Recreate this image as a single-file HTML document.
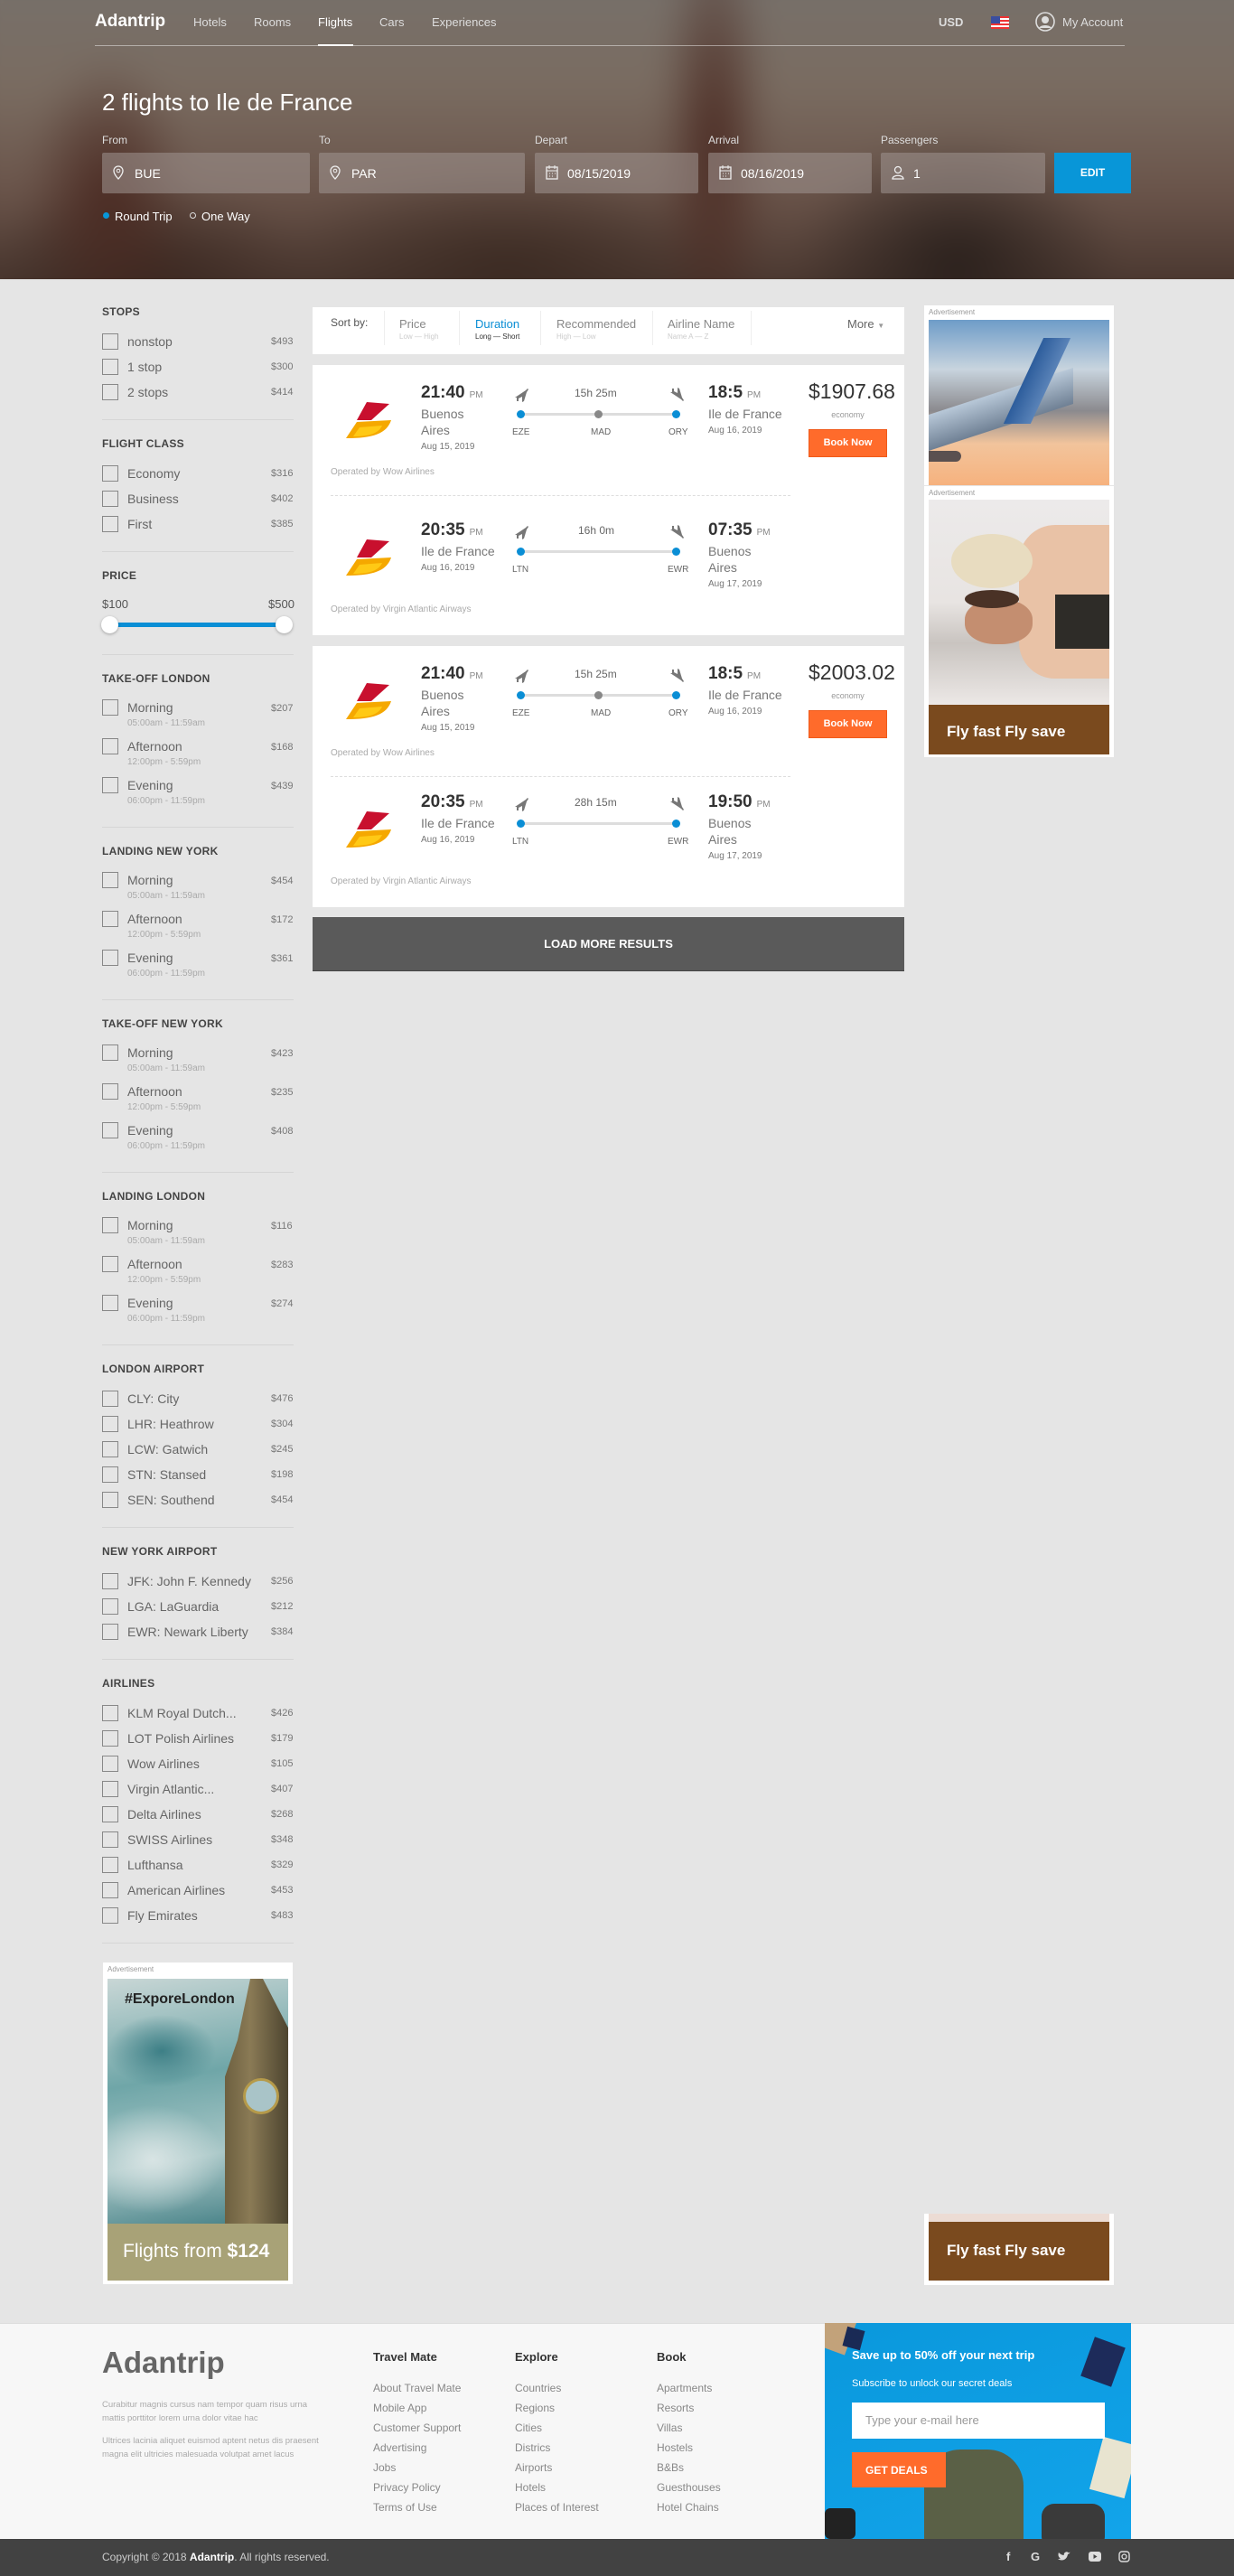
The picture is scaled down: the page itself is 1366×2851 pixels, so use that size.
<!DOCTYPE html>
<html><head><meta charset="utf-8">
<style>
*{margin:0;padding:0;box-sizing:border-box}
body{width:1366px;height:2851px;background:#e5e5e5;font-family:"Liberation Sans",Arial,sans-serif;position:relative;overflow:hidden;color:#555}
.a{position:absolute;white-space:nowrap}
.hero{position:absolute;left:0;top:0;width:1366px;height:309px;overflow:hidden;background:#6e655e}
.hero .bg{position:absolute;inset:-40px;filter:blur(18px);background:
radial-gradient(ellipse 60px 260px at 830px 200px,#4a2a22 0,transparent 100%),
radial-gradient(ellipse 90px 160px at 160px 260px,#4a2a22 0,transparent 100%),
radial-gradient(ellipse 180px 140px at 1100px 330px,#2a201c 0,transparent 100%),
radial-gradient(ellipse 260px 120px at 600px 340px,#3b2a22 0,transparent 100%),
radial-gradient(ellipse 200px 110px at 200px 350px,#3a2720 0,transparent 100%),
linear-gradient(180deg,#76716c 0%,#7a6c61 35%,#6a544a 65%,#3f2e27 100%)}
.nav{color:#ddd;font-size:13px;top:17px}
.lbl{color:#ddd;font-size:12px;top:148px}
.inp{position:absolute;top:169px;height:45px;background:rgba(160,150,145,.55);border-radius:2px;color:#fff;font-size:14px;padding:15px 0 0 36px}
.inp svg{position:absolute;left:12px;top:14px}
.sh{font-size:12px;font-weight:bold;color:#444;letter-spacing:.3px}
.cb{position:absolute;width:18px;height:18px;border:1px solid #888;background:transparent}
.rl{font-size:14px;color:#666}
.rp{font-size:11px;color:#777}
.rs{font-size:10px;color:#aaa}
.dv{position:absolute;left:113px;width:212px;height:1px;background:#d5d5d5}
.card{position:absolute;left:346px;width:655px;background:#fff}
.t{font-size:19px;font-weight:bold;color:#333}
.t small{font-size:10px;font-weight:normal;color:#888;margin-left:5px}
.c{font-size:14px;color:#777;line-height:18px}
.d{font-size:10px;color:#777}
.code{font-size:10px;color:#666}
.op{font-size:10px;color:#aaa}
.ln{position:absolute;height:3px;background:#ddd}
.dot{position:absolute;width:9px;height:9px;border-radius:50%;background:#0a8ed5}
.gdot{background:#888}
.fl{position:absolute;font-size:12px;color:#888}
.ft{font-size:12px;color:#999}
</style></head><body>

<div class="hero"><div class="bg"></div>
<div class="a" style="left:105px;top:13px;font-size:19px;font-weight:bold;color:#fff">Adantrip</div>
<div class="a nav" style="left:214px">Hotels</div>
<div class="a nav" style="left:281px">Rooms</div>
<div class="a nav" style="left:352px;color:#fff">Flights</div>
<div class="a nav" style="left:420px">Cars</div>
<div class="a nav" style="left:478px">Experiences</div>
<div class="a nav" style="left:1039px;font-weight:bold">USD</div>
<div class="a" style="left:1097px;top:18px;width:20px;height:14px;background:repeating-linear-gradient(180deg,#e33 0 2px,#fff 2px 4px)"><div style="width:10px;height:8px;background:#3a4ea0"></div></div>
<svg class="a" style="left:1146px;top:13px" width="22" height="22" viewBox="0 0 22 22"><circle cx="11" cy="11" r="10" fill="none" stroke="#ddd" stroke-width="1.6"/><circle cx="11" cy="9" r="4" fill="#ddd"/><path d="M4 18c2-4 12-4 14 0" fill="#ddd"/></svg>
<div class="a nav" style="left:1176px">My Account</div>
<div class="a" style="left:105px;top:50px;width:1140px;height:1px;background:rgba(255,255,255,.45)"></div>
<div class="a" style="left:352px;top:49px;width:39px;height:2px;background:#fff"></div>
<div class="a" style="left:113px;top:98px;font-size:26px;color:#fff">2 flights to Ile de France</div>
<div class="a lbl" style="left:113px">From</div><div class="a lbl" style="left:353px">To</div><div class="a lbl" style="left:592px">Depart</div><div class="a lbl" style="left:784px">Arrival</div><div class="a lbl" style="left:975px">Passengers</div>
<div class="inp" style="left:113px;width:230px"><svg width="12" height="16" viewBox="0 0 12 16"><path d="M6 1a5 5 0 0 0-5 5c0 4 5 9 5 9s5-5 5-9a5 5 0 0 0-5-5z" fill="none" stroke="#eee" stroke-width="1.3"/><circle cx="6" cy="6" r="1.8" fill="none" stroke="#eee"/></svg>BUE</div>
<div class="inp" style="left:353px;width:228px"><svg width="12" height="16" viewBox="0 0 12 16"><path d="M6 1a5 5 0 0 0-5 5c0 4 5 9 5 9s5-5 5-9a5 5 0 0 0-5-5z" fill="none" stroke="#eee" stroke-width="1.3"/><circle cx="6" cy="6" r="1.8" fill="none" stroke="#eee"/></svg>PAR</div>
<div class="inp" style="left:592px;width:181px"><svg width="14" height="16" viewBox="0 0 14 16"><rect x="1" y="2" width="12" height="13" fill="none" stroke="#eee" stroke-width="1.3"/><path d="M4 0v4M10 0v4M1 6h12M4 9h1M7 9h1M10 9h1M4 12h1M7 12h1" stroke="#eee"/></svg>08/15/2019</div>
<div class="inp" style="left:784px;width:181px"><svg width="14" height="16" viewBox="0 0 14 16"><rect x="1" y="2" width="12" height="13" fill="none" stroke="#eee" stroke-width="1.3"/><path d="M4 0v4M10 0v4M1 6h12M4 9h1M7 9h1M10 9h1M4 12h1M7 12h1" stroke="#eee"/></svg>08/16/2019</div>
<div class="inp" style="left:975px;width:182px"><svg width="14" height="16" viewBox="0 0 14 16"><circle cx="7" cy="5" r="3.5" fill="none" stroke="#eee" stroke-width="1.3"/><path d="M1 15c0-5 12-5 12 0z" fill="none" stroke="#eee" stroke-width="1.3"/></svg>1</div>
<div class="a" style="left:1167px;top:169px;width:85px;height:45px;background:#0896d8;color:#fff;font-size:12px;font-weight:bold;text-align:center;line-height:45px">EDIT</div>
<div class="a" style="left:114px;top:235px;width:7px;height:7px;border-radius:50%;background:#0896d8"></div>
<div class="a" style="left:127px;top:232px;font-size:13px;color:#fff">Round Trip</div>
<div class="a" style="left:210px;top:235px;width:7px;height:7px;border-radius:50%;border:1px solid #ddd"></div>
<div class="a" style="left:223px;top:232px;font-size:13px;color:#fff">One Way</div>
</div>

<!-- SIDEBAR -->
<div class="a sh" style="left:113px;top:338px">STOPS</div>
<div class="cb" style="left:113px;top:369px"></div><div class="a rl" style="left:141px;top:370px">nonstop</div><div class="a rp" style="left:300px;top:372px">$493</div>
<div class="cb" style="left:113px;top:397px"></div><div class="a rl" style="left:141px;top:398px">1 stop</div><div class="a rp" style="left:300px;top:400px">$300</div>
<div class="cb" style="left:113px;top:425px"></div><div class="a rl" style="left:141px;top:426px">2 stops</div><div class="a rp" style="left:300px;top:428px">$414</div>
<div class="dv" style="top:464px"></div>
<div class="a sh" style="left:113px;top:484px">FLIGHT CLASS</div>
<div class="cb" style="left:113px;top:515px"></div><div class="a rl" style="left:141px;top:516px">Economy</div><div class="a rp" style="left:300px;top:518px">$316</div>
<div class="cb" style="left:113px;top:543px"></div><div class="a rl" style="left:141px;top:544px">Business</div><div class="a rp" style="left:300px;top:546px">$402</div>
<div class="cb" style="left:113px;top:571px"></div><div class="a rl" style="left:141px;top:572px">First</div><div class="a rp" style="left:300px;top:574px">$385</div>
<div class="dv" style="top:610px"></div>
<div class="a sh" style="left:113px;top:630px">PRICE</div>
<div class="a" style="left:113px;top:661px;font-size:13px;color:#555">$100</div>
<div class="a" style="left:297px;top:661px;font-size:13px;color:#555">$500</div>
<div class="a" style="left:120px;top:689px;width:198px;height:5px;background:#0a8ed5"></div>
<div class="a" style="left:112px;top:682px;width:19px;height:19px;border-radius:50%;background:#fff;box-shadow:0 1px 3px rgba(0,0,0,.3)"></div>
<div class="a" style="left:305px;top:682px;width:19px;height:19px;border-radius:50%;background:#fff;box-shadow:0 1px 3px rgba(0,0,0,.3)"></div>
<div class="dv" style="top:724px"></div>

<!-- time sections -->
<div class="a sh" style="left:113px;top:744px">TAKE-OFF LONDON</div>
<div class="cb" style="left:113px;top:774px"></div><div class="a rl" style="left:141px;top:775px">Morning</div><div class="a rs" style="left:141px;top:795px">05:00am - 11:59am</div><div class="a rp" style="left:300px;top:778px">$207</div>
<div class="cb" style="left:113px;top:817px"></div><div class="a rl" style="left:141px;top:818px">Afternoon</div><div class="a rs" style="left:141px;top:838px">12:00pm - 5:59pm</div><div class="a rp" style="left:300px;top:821px">$168</div>
<div class="cb" style="left:113px;top:860px"></div><div class="a rl" style="left:141px;top:861px">Evening</div><div class="a rs" style="left:141px;top:881px">06:00pm - 11:59pm</div><div class="a rp" style="left:300px;top:864px">$439</div>
<div class="dv" style="top:915px"></div>

<div class="a sh" style="left:113px;top:935px">LANDING NEW YORK</div>
<div class="cb" style="left:113px;top:965px"></div><div class="a rl" style="left:141px;top:966px">Morning</div><div class="a rs" style="left:141px;top:986px">05:00am - 11:59am</div><div class="a rp" style="left:300px;top:969px">$454</div>
<div class="cb" style="left:113px;top:1008px"></div><div class="a rl" style="left:141px;top:1009px">Afternoon</div><div class="a rs" style="left:141px;top:1029px">12:00pm - 5:59pm</div><div class="a rp" style="left:300px;top:1012px">$172</div>
<div class="cb" style="left:113px;top:1051px"></div><div class="a rl" style="left:141px;top:1052px">Evening</div><div class="a rs" style="left:141px;top:1072px">06:00pm - 11:59pm</div><div class="a rp" style="left:300px;top:1055px">$361</div>
<div class="dv" style="top:1106px"></div>

<div class="a sh" style="left:113px;top:1126px">TAKE-OFF NEW YORK</div>
<div class="cb" style="left:113px;top:1156px"></div><div class="a rl" style="left:141px;top:1157px">Morning</div><div class="a rs" style="left:141px;top:1177px">05:00am - 11:59am</div><div class="a rp" style="left:300px;top:1160px">$423</div>
<div class="cb" style="left:113px;top:1199px"></div><div class="a rl" style="left:141px;top:1200px">Afternoon</div><div class="a rs" style="left:141px;top:1220px">12:00pm - 5:59pm</div><div class="a rp" style="left:300px;top:1203px">$235</div>
<div class="cb" style="left:113px;top:1242px"></div><div class="a rl" style="left:141px;top:1243px">Evening</div><div class="a rs" style="left:141px;top:1263px">06:00pm - 11:59pm</div><div class="a rp" style="left:300px;top:1246px">$408</div>
<div class="dv" style="top:1297px"></div>

<div class="a sh" style="left:113px;top:1317px">LANDING LONDON</div>
<div class="cb" style="left:113px;top:1347px"></div><div class="a rl" style="left:141px;top:1348px">Morning</div><div class="a rs" style="left:141px;top:1368px">05:00am - 11:59am</div><div class="a rp" style="left:300px;top:1351px">$116</div>
<div class="cb" style="left:113px;top:1390px"></div><div class="a rl" style="left:141px;top:1391px">Afternoon</div><div class="a rs" style="left:141px;top:1411px">12:00pm - 5:59pm</div><div class="a rp" style="left:300px;top:1394px">$283</div>
<div class="cb" style="left:113px;top:1433px"></div><div class="a rl" style="left:141px;top:1434px">Evening</div><div class="a rs" style="left:141px;top:1454px">06:00pm - 11:59pm</div><div class="a rp" style="left:300px;top:1437px">$274</div>
<div class="dv" style="top:1488px"></div>

<div class="a sh" style="left:113px;top:1508px">LONDON AIRPORT</div>
<div class="cb" style="left:113px;top:1539px"></div><div class="a rl" style="left:141px;top:1540px">CLY: City</div><div class="a rp" style="left:300px;top:1542px">$476</div>
<div class="cb" style="left:113px;top:1567px"></div><div class="a rl" style="left:141px;top:1568px">LHR: Heathrow</div><div class="a rp" style="left:300px;top:1570px">$304</div>
<div class="cb" style="left:113px;top:1595px"></div><div class="a rl" style="left:141px;top:1596px">LCW: Gatwich</div><div class="a rp" style="left:300px;top:1598px">$245</div>
<div class="cb" style="left:113px;top:1623px"></div><div class="a rl" style="left:141px;top:1624px">STN: Stansed</div><div class="a rp" style="left:300px;top:1626px">$198</div>
<div class="cb" style="left:113px;top:1651px"></div><div class="a rl" style="left:141px;top:1652px">SEN: Southend</div><div class="a rp" style="left:300px;top:1654px">$454</div>
<div class="dv" style="top:1690px"></div>

<div class="a sh" style="left:113px;top:1710px">NEW YORK AIRPORT</div>
<div class="cb" style="left:113px;top:1741px"></div><div class="a rl" style="left:141px;top:1742px">JFK: John F. Kennedy</div><div class="a rp" style="left:300px;top:1744px">$256</div>
<div class="cb" style="left:113px;top:1769px"></div><div class="a rl" style="left:141px;top:1770px">LGA: LaGuardia</div><div class="a rp" style="left:300px;top:1772px">$212</div>
<div class="cb" style="left:113px;top:1797px"></div><div class="a rl" style="left:141px;top:1798px">EWR: Newark Liberty</div><div class="a rp" style="left:300px;top:1800px">$384</div>
<div class="dv" style="top:1836px"></div>

<div class="a sh" style="left:113px;top:1856px">AIRLINES</div>
<div class="cb" style="left:113px;top:1887px"></div><div class="a rl" style="left:141px;top:1888px">KLM Royal Dutch...</div><div class="a rp" style="left:300px;top:1890px">$426</div>
<div class="cb" style="left:113px;top:1915px"></div><div class="a rl" style="left:141px;top:1916px">LOT Polish Airlines</div><div class="a rp" style="left:300px;top:1918px">$179</div>
<div class="cb" style="left:113px;top:1943px"></div><div class="a rl" style="left:141px;top:1944px">Wow Airlines</div><div class="a rp" style="left:300px;top:1946px">$105</div>
<div class="cb" style="left:113px;top:1971px"></div><div class="a rl" style="left:141px;top:1972px">Virgin Atlantic...</div><div class="a rp" style="left:300px;top:1974px">$407</div>
<div class="cb" style="left:113px;top:1999px"></div><div class="a rl" style="left:141px;top:2000px">Delta Airlines</div><div class="a rp" style="left:300px;top:2002px">$268</div>
<div class="cb" style="left:113px;top:2027px"></div><div class="a rl" style="left:141px;top:2028px">SWISS Airlines</div><div class="a rp" style="left:300px;top:2030px">$348</div>
<div class="cb" style="left:113px;top:2055px"></div><div class="a rl" style="left:141px;top:2056px">Lufthansa</div><div class="a rp" style="left:300px;top:2058px">$329</div>
<div class="cb" style="left:113px;top:2083px"></div><div class="a rl" style="left:141px;top:2084px">American Airlines</div><div class="a rp" style="left:300px;top:2086px">$453</div>
<div class="cb" style="left:113px;top:2111px"></div><div class="a rl" style="left:141px;top:2112px">Fly Emirates</div><div class="a rp" style="left:300px;top:2114px">$483</div>
<div class="dv" style="top:2150px"></div>

<!-- left ad -->
<div class="a" style="left:114px;top:2172px;width:210px;height:356px;background:#fff">
<div class="a" style="left:5px;top:3px;font-size:8px;color:#999">Advertisement</div>
<div class="a" style="left:5px;top:18px;width:200px;height:271px;background:radial-gradient(ellipse 60px 40px at 60px 80px,#3d7f86,transparent),radial-gradient(ellipse 80px 60px at 50px 200px,#d8e4e4,transparent),linear-gradient(170deg,#c9d7d6 0%,#6fa6a8 40%,#a9c7c7 70%,#3f7c82 100%)">
<div class="a" style="left:130px;top:0;width:70px;height:271px;background:linear-gradient(90deg,#6d6040,#8a7a55 40%,#4d4530);clip-path:polygon(40% 0,60% 0,100% 20%,100% 100%,0 100%,0 40%,20% 25%)"></div>
<div class="a" style="left:150px;top:110px;width:40px;height:40px;border-radius:50%;background:#a9c4c8;border:3px solid #b59a4a"></div>
<div class="a" style="left:19px;top:14px;font-size:16px;font-weight:bold;color:#222">#ExporeLondon</div>
</div>
<div class="a" style="left:5px;top:289px;width:200px;height:63px;background:#a8a277;color:#fff;font-size:21px;padding:19px 0 0 17px">Flights from <b>$124</b></div>
</div>

<!-- sort -->
<div class="a" style="left:346px;top:340px;width:655px;height:52px;background:#fff">
<div class="a" style="left:20px;top:10px;font-size:12px;color:#555">Sort by:</div>
<div class="a" style="left:79px;top:4px;width:1px;height:38px;background:#eee"></div>
<div class="a" style="left:96px;top:11px;font-size:13px;color:#888">Price</div><div class="a" style="left:96px;top:28px;font-size:8px;color:#ccc">Low — High</div>
<div class="a" style="left:162px;top:4px;width:1px;height:38px;background:#eee"></div>
<div class="a" style="left:180px;top:11px;font-size:13px;color:#0a8ed5">Duration</div><div class="a" style="left:180px;top:28px;font-size:8px;color:#333">Long — Short</div>
<div class="a" style="left:252px;top:4px;width:1px;height:38px;background:#eee"></div>
<div class="a" style="left:270px;top:11px;font-size:13px;color:#888">Recommended</div><div class="a" style="left:270px;top:28px;font-size:8px;color:#ccc">High — Low</div>
<div class="a" style="left:376px;top:4px;width:1px;height:38px;background:#eee"></div>
<div class="a" style="left:393px;top:11px;font-size:13px;color:#888">Airline Name</div><div class="a" style="left:393px;top:28px;font-size:8px;color:#ccc">Name A — Z</div>
<div class="a" style="left:485px;top:4px;width:1px;height:38px;background:#eee"></div>
<div class="a" style="left:592px;top:11px;font-size:13px;color:#666">More <span style="font-size:8px;color:#999">▼</span></div>
</div>

<svg width="0" height="0" style="position:absolute"><defs>
<g id="logo"><path d="M23 0 L48 2 L28 20 L12 20 Z" fill="#c8102e"/><path d="M12 22 L50 20 C45 35 30 40 0 40 Z" fill="#f5a800"/><path d="M15 28 L40 26 C36 35 25 38 8 38Z" fill="#ffc915"/></g>
<g id="pl"><path d="M2 12 L14 4 L16 2 L17 3 L15 6 L12 16 L10 17 L10 11 L6 13 L6 16 L4 16 L4 12 Z" fill="#777"/></g>
</defs></svg>

<!-- CARD 1 -->
<div class="card" style="top:404px;height:299px">
<svg class="a" style="left:37px;top:41px" width="50" height="42"><use href="#logo"/></svg>
<div class="a t" style="left:120px;top:20px">21:40<small>PM</small></div>
<div class="a c" style="left:120px;top:45px">Buenos<br>Aires</div>
<div class="a d" style="left:120px;top:85px">Aug 15, 2019</div>
<svg class="a" style="left:222px;top:24px" width="18" height="18"><use href="#pl"/></svg>
<div class="a" style="left:290px;top:24px;font-size:12px;color:#666">15h 25m</div>
<svg class="a" style="left:394px;top:24px;transform:scaleY(-1)" width="18" height="18"><use href="#pl"/></svg>
<div class="ln" style="left:230px;top:53px;width:172px"></div>
<div class="dot" style="left:226px;top:50px"></div><div class="dot gdot" style="left:312px;top:50px"></div><div class="dot" style="left:398px;top:50px"></div>
<div class="a code" style="left:221px;top:69px">EZE</div><div class="a code" style="left:308px;top:69px">MAD</div><div class="a code" style="left:394px;top:69px">ORY</div>
<div class="a t" style="left:438px;top:20px">18:5<small>PM</small></div>
<div class="a c" style="left:438px;top:45px">Ile de France</div>
<div class="a d" style="left:438px;top:67px">Aug 16, 2019</div>
<div class="a" style="left:549px;top:16px;font-size:23px;color:#333">$1907.68</div>
<div class="a" style="left:549px;top:50px;width:87px;text-align:center;font-size:9px;color:#999">economy</div>
<div class="a" style="left:549px;top:71px;width:87px;height:31px;background:#ff6b2b;border:1px solid #f05a1a;color:#fff;font-size:11px;font-weight:bold;text-align:center;line-height:29px">Book Now</div>
<div class="a op" style="left:20px;top:113px">Operated by Wow Airlines</div>
<div class="a" style="left:20px;top:144px;width:509px;border-top:1px dashed #ddd"></div>
<svg class="a" style="left:37px;top:193px" width="50" height="42"><use href="#logo"/></svg>
<div class="a t" style="left:120px;top:172px">20:35<small>PM</small></div>
<div class="a c" style="left:120px;top:197px">Ile de France</div>
<div class="a d" style="left:120px;top:219px">Aug 16, 2019</div>
<svg class="a" style="left:222px;top:176px" width="18" height="18"><use href="#pl"/></svg>
<div class="a" style="left:294px;top:176px;font-size:12px;color:#666">16h 0m</div>
<svg class="a" style="left:394px;top:176px;transform:scaleY(-1)" width="18" height="18"><use href="#pl"/></svg>
<div class="ln" style="left:230px;top:205px;width:172px"></div>
<div class="dot" style="left:226px;top:202px"></div><div class="dot" style="left:398px;top:202px"></div>
<div class="a code" style="left:221px;top:221px">LTN</div><div class="a code" style="left:393px;top:221px">EWR</div>
<div class="a t" style="left:438px;top:172px">07:35<small>PM</small></div>
<div class="a c" style="left:438px;top:197px">Buenos<br>Aires</div>
<div class="a d" style="left:438px;top:237px">Aug 17, 2019</div>
<div class="a op" style="left:20px;top:265px">Operated by Virgin Atlantic Airways</div>
</div>

<!-- CARD 2 -->
<div class="card" style="top:715px;height:289px">
<svg class="a" style="left:37px;top:41px" width="50" height="42"><use href="#logo"/></svg>
<div class="a t" style="left:120px;top:20px">21:40<small>PM</small></div>
<div class="a c" style="left:120px;top:45px">Buenos<br>Aires</div>
<div class="a d" style="left:120px;top:85px">Aug 15, 2019</div>
<svg class="a" style="left:222px;top:24px" width="18" height="18"><use href="#pl"/></svg>
<div class="a" style="left:290px;top:24px;font-size:12px;color:#666">15h 25m</div>
<svg class="a" style="left:394px;top:24px;transform:scaleY(-1)" width="18" height="18"><use href="#pl"/></svg>
<div class="ln" style="left:230px;top:53px;width:172px"></div>
<div class="dot" style="left:226px;top:50px"></div><div class="dot gdot" style="left:312px;top:50px"></div><div class="dot" style="left:398px;top:50px"></div>
<div class="a code" style="left:221px;top:69px">EZE</div><div class="a code" style="left:308px;top:69px">MAD</div><div class="a code" style="left:394px;top:69px">ORY</div>
<div class="a t" style="left:438px;top:20px">18:5<small>PM</small></div>
<div class="a c" style="left:438px;top:45px">Ile de France</div>
<div class="a d" style="left:438px;top:67px">Aug 16, 2019</div>
<div class="a" style="left:549px;top:16px;font-size:23px;color:#333">$2003.02</div>
<div class="a" style="left:549px;top:50px;width:87px;text-align:center;font-size:9px;color:#999">economy</div>
<div class="a" style="left:549px;top:71px;width:87px;height:31px;background:#ff6b2b;border:1px solid #f05a1a;color:#fff;font-size:11px;font-weight:bold;text-align:center;line-height:29px">Book Now</div>
<div class="a op" style="left:20px;top:113px">Operated by Wow Airlines</div>
<div class="a" style="left:20px;top:144px;width:509px;border-top:1px dashed #ddd"></div>
<svg class="a" style="left:37px;top:183px" width="50" height="42"><use href="#logo"/></svg>
<div class="a t" style="left:120px;top:162px">20:35<small>PM</small></div>
<div class="a c" style="left:120px;top:187px">Ile de France</div>
<div class="a d" style="left:120px;top:209px">Aug 16, 2019</div>
<svg class="a" style="left:222px;top:166px" width="18" height="18"><use href="#pl"/></svg>
<div class="a" style="left:290px;top:166px;font-size:12px;color:#666">28h 15m</div>
<svg class="a" style="left:394px;top:166px;transform:scaleY(-1)" width="18" height="18"><use href="#pl"/></svg>
<div class="ln" style="left:230px;top:195px;width:172px"></div>
<div class="dot" style="left:226px;top:192px"></div><div class="dot" style="left:398px;top:192px"></div>
<div class="a code" style="left:221px;top:211px">LTN</div><div class="a code" style="left:393px;top:211px">EWR</div>
<div class="a t" style="left:438px;top:162px">19:50<small>PM</small></div>
<div class="a c" style="left:438px;top:187px">Buenos<br>Aires</div>
<div class="a d" style="left:438px;top:227px">Aug 17, 2019</div>
<div class="a op" style="left:20px;top:255px">Operated by Virgin Atlantic Airways</div>
</div>

<div class="a" style="left:346px;top:1015px;width:655px;height:60px;background:#5a5a5a;border-bottom:1px solid #444;color:#fff;font-size:13px;font-weight:bold;text-align:center;line-height:60px">LOAD MORE RESULTS</div>

<!-- right ads -->
<div class="a" style="left:1023px;top:338px;width:210px;height:500px;background:#fff">
<div class="a" style="left:5px;top:3px;font-size:8px;color:#999">Advertisement</div>
<div class="a" style="left:5px;top:16px;width:200px;height:183px;overflow:hidden;background:linear-gradient(180deg,#6e9cc8 0%,#c8d4de 30%,#8b8a8e 55%,#f2c49c 75%,#f6b27e 100%)">
<div class="a" style="left:0;top:70px;width:160px;height:40px;background:linear-gradient(180deg,#b8c8d8,#6f8094);transform:skewY(-18deg);transform-origin:0 0;top:105px"></div>
<div class="a" style="left:105px;top:20px;width:30px;height:95px;background:linear-gradient(90deg,#2d5d9c,#5a83b8);transform:skewX(-25deg)"></div>
<div class="a" style="left:0;top:145px;width:36px;height:12px;background:#5a5050;border-radius:0 6px 6px 0"></div>
</div>
<div class="a" style="left:0;top:199px;width:210px;height:1px;background:#e5e5e5"></div>
<div class="a" style="left:5px;top:203px;font-size:8px;color:#999">Advertisement</div>
<div class="a" style="left:5px;top:215px;width:200px;height:227px;overflow:hidden;background:linear-gradient(180deg,#eceaea 0%,#e8e4e2 50%,#c9c4c0 70%,#ece8e6 100%)">
<div class="a" style="left:100px;top:28px;width:100px;height:170px;background:#e9c2a6;border-radius:40px 0 0 40px"></div>
<div class="a" style="left:140px;top:105px;width:60px;height:60px;background:#2e2c28"></div>
<div class="a" style="left:25px;top:38px;width:90px;height:60px;background:#e8dcc0;border-radius:50%"></div>
<div class="a" style="left:40px;top:110px;width:75px;height:50px;background:#c48e70;border-radius:45%"></div>
<div class="a" style="left:40px;top:100px;width:60px;height:20px;background:#4a3226;border-radius:50%"></div>
</div>
<div class="a" style="left:5px;top:442px;width:200px;height:55px;background:#7a4a1e;color:#fff;font-size:17px;font-weight:bold;padding:20px 0 0 20px">Fly fast Fly save</div>
</div>

<div class="a" style="left:1023px;top:2450px;width:210px;height:79px;background:#fff">
<div class="a" style="left:5px;top:0;width:200px;height:9px;background:#ecdcd4"></div>
<div class="a" style="left:5px;top:9px;width:200px;height:65px;background:#7a4a1e;color:#fff;font-size:17px;font-weight:bold;padding:22px 0 0 20px">Fly fast Fly save</div>
</div>

<!-- footer -->
<div class="a" style="left:0;top:2571px;width:1366px;height:239px;background:#f7f7f7;border-top:1px solid #ddd"></div>
<div class="a" style="left:113px;top:2596px;font-size:33px;font-weight:bold;color:#666">Adantrip</div>
<div class="a" style="left:113px;top:2654px;font-size:9.5px;color:#aaa;line-height:15px;white-space:normal;width:250px">Curabitur magnis cursus nam tempor quam risus urna mattis porttitor lorem urna dolor vitae hac</div>
<div class="a" style="left:113px;top:2694px;font-size:9.5px;color:#aaa;line-height:15px;white-space:normal;width:250px">Ultrices lacinia aliquet euismod aptent netus dis praesent magna elit ultricies malesuada volutpat amet lacus</div>
<div class="a" style="left:413px;top:2601px;font-size:13px;font-weight:bold;color:#333">Travel Mate</div>
<div class="a" style="left:570px;top:2601px;font-size:13px;font-weight:bold;color:#333">Explore</div>
<div class="a" style="left:727px;top:2601px;font-size:13px;font-weight:bold;color:#333">Book</div>
<div class="fl" style="left:413px;top:2632px;line-height:22px">About Travel Mate<br>Mobile App<br>Customer Support<br>Advertising<br>Jobs<br>Privacy Policy<br>Terms of Use</div>
<div class="fl" style="left:570px;top:2632px;line-height:22px">Countries<br>Regions<br>Cities<br>Districs<br>Airports<br>Hotels<br>Places of Interest</div>
<div class="fl" style="left:727px;top:2632px;line-height:22px">Apartments<br>Resorts<br>Villas<br>Hostels<br>B&amp;Bs<br>Guesthouses<br>Hotel Chains</div>

<div class="a" style="left:913px;top:2571px;width:339px;height:239px;overflow:hidden;background:linear-gradient(160deg,#0a98dc,#12a4ea)">
<div class="a" style="left:0;top:0;width:40px;height:40px;background:#c2a27a;transform:rotate(20deg);left:-10px;top:-10px"></div>
<div class="a" style="left:22px;top:6px;width:20px;height:22px;background:#1a2a55;transform:rotate(15deg)"></div>
<div class="a" style="left:290px;top:20px;width:36px;height:46px;background:#1d2b5a;transform:rotate(20deg)"></div>
<div class="a" style="left:110px;top:140px;width:110px;height:120px;background:#5a6046;border-radius:40px 40px 0 0"></div>
<div class="a" style="left:0;top:205px;width:34px;height:34px;background:#222;border-radius:6px"></div>
<div class="a" style="left:240px;top:200px;width:70px;height:50px;background:#3a3a3a;border-radius:14px"></div>
<div class="a" style="left:300px;top:130px;width:40px;height:60px;background:#e8e4d0;transform:rotate(15deg)"></div>
<div class="a" style="left:30px;top:28px;font-size:13px;font-weight:bold;color:#fff">Save up to 50% off your next trip</div>
<div class="a" style="left:30px;top:61px;font-size:11px;color:#fff">Subscribe to unlock our secret deals</div>
<div class="a" style="left:30px;top:88px;width:280px;height:40px;background:#fff;font-size:13px;color:#999;padding:12px 0 0 15px">Type your e-mail here</div>
<div class="a" style="left:30px;top:143px;width:104px;height:39px;background:#ff6b2b;color:#fff;font-size:12px;font-weight:bold;padding:13px 0 0 15px">GET DEALS</div>
</div>

<div class="a" style="left:0;top:2810px;width:1366px;height:41px;background:#424242"></div>
<div class="a" style="left:113px;top:2823px;font-size:12px;color:#ccc">Copyright © 2018 <b style="color:#fff">Adantrip</b>. All rights reserved.</div>
<div class="a" style="left:1114px;top:2822px;font-size:13px;color:#ddd;font-weight:bold;letter-spacing:0">f</div>
<div class="a" style="left:1141px;top:2822px;font-size:13px;color:#ddd;font-weight:bold">G</div>
<svg class="a" style="left:1171px;top:2824px" width="14" height="12" viewBox="0 0 14 12"><path d="M14 1.5l-1.6.5 1.2-1.5-1.8.7A3 3 0 0 0 6.8 4 8 8 0 0 1 1 1s-2 4 2 6.5C2 8 1 8 0 8c4 3 10 1.5 11-5z" fill="#ddd"/></svg>
<svg class="a" style="left:1205px;top:2824px" width="14" height="12"><rect width="14" height="11" rx="3" fill="#ddd"/><path d="M5.5 3l4 2.5-4 2.5z" fill="#424242"/></svg>
<svg class="a" style="left:1238px;top:2823px" width="13" height="13"><rect x="1" y="1" width="11" height="11" rx="3" fill="none" stroke="#ddd" stroke-width="1.4"/><circle cx="6.5" cy="6.5" r="2.5" fill="none" stroke="#ddd" stroke-width="1.3"/></svg>
</body></html>
